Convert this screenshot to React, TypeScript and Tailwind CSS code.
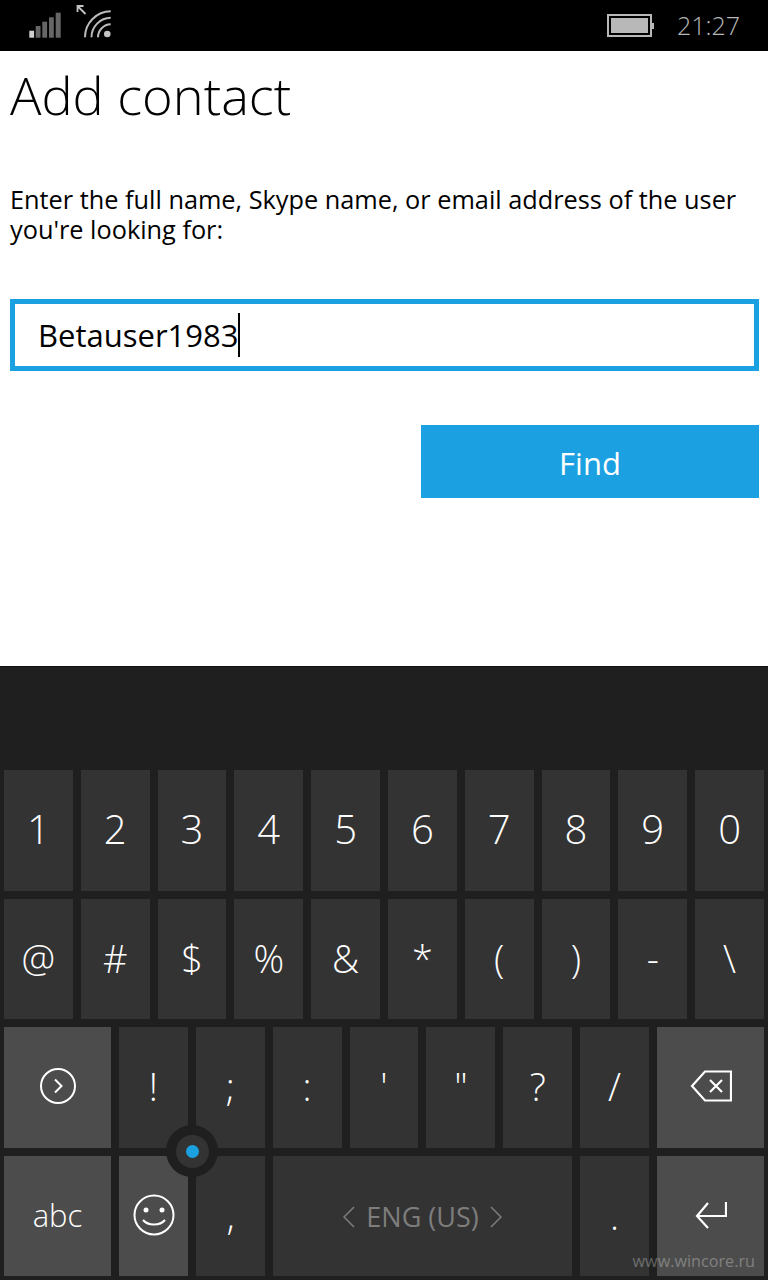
import React from 'react';

const row1 = ['1', '2', '3', '4', '5', '6', '7', '8', '9', '0'];
const row2 = ['@', '#', '$', '%', '&', '*', '(', ')', '-', '\\'];
const row3 = ['!', ';', ':', "'", '"', '?', '/'];

function Key({ label, wide, light, size, children }: { label?: string; wide?: boolean; light?: boolean; size?: string; children?: React.ReactNode }) {
  return (
    <div
      className={`flex items-center justify-center text-white font-light leading-none ${size ?? 'text-[38px] pb-[2px]'} ${wide ? 'w-[107px] shrink-0' : 'flex-1 min-w-0'} ${light ? 'bg-[#4c4c4c]' : 'bg-[#333333]'}`}
    >
      {label}
      {children}
    </div>
  );
}

function StatusBar() {
  return (
    <div className="h-[51px] bg-black flex items-center text-[#b8b8b8] shrink-0">
      <svg width="120" height="51" viewBox="0 0 120 51" className="shrink-0">
        <rect x="29.300" y="30.700" width="4.800" height="7" fill="#cfcfcf" />
        <rect x="35.700" y="26" width="4.800" height="11.700" fill="#666" />
        <rect x="42.300" y="21.700" width="4.800" height="16" fill="#666" />
        <rect x="49" y="17.300" width="4.800" height="20.400" fill="#666" />
        <rect x="55.700" y="12.700" width="5" height="25" fill="#666" />
        <path d="M85.500 14L77.500 6M77.500 12V6H83.500" stroke="#c4c4c4" strokeWidth="1.800" fill="none" />
        <path d="M85 37.300A26 26 0 0 1 110.700 11.300" stroke="#bbb" strokeWidth="2" fill="none" />
        <path d="M91.500 37.300A19.500 19.500 0 0 1 110.700 17.800" stroke="#bbb" strokeWidth="2" fill="none" />
        <path d="M98 37.300A13 13 0 0 1 110.700 24.300" stroke="#bbb" strokeWidth="2" fill="none" />
        <circle cx="107.300" cy="34" r="3.300" fill="#c4c4c4" />
      </svg>
      <div className="ml-auto flex items-center">
        <div className="w-[45px] h-[23px] border-2 border-[#b8b8b8] p-[2px]">
          <div className="w-full h-full bg-[#b8b8b8]" />
        </div>
        <div className="w-[2px] h-[6px] bg-[#b8b8b8]" />
        <span className="ml-[23px] mr-[28px] text-[25px] leading-none font-light">21:27</span>
      </div>
    </div>
  );
}

export default function App() {
  return (
    <div className="relative w-[768px] h-[1280px] overflow-hidden flex flex-col bg-white" style={{ fontFamily: '"Open Sans", "Noto Sans", sans-serif' }}>
      <StatusBar />

      {/* Page content */}
      <div className="flex-1 min-h-0 px-[10px] text-black">
        <h1 className="text-[52.300px] leading-[60px] font-light mt-[14px]">Add contact</h1>
        <p className="text-[25.300px] leading-[30px] mt-[58px] pt-[1px] -mb-[1px]">
          Enter the full name, Skype name, or email address of the user you're looking for:
        </p>
        <div className="mt-[56px] mr-[-1px] h-[72px] border-[5px] border-[#1ba1e2] flex items-center pl-[23px] text-[31px]">
          <span>Betauser1983</span>
          <span className="w-[2px] h-[44px] bg-black" />
        </div>
        <div className="flex justify-end mt-[54px] mr-[-1px]">
          <div className="w-[338px] h-[73px] pt-[3px] bg-[#1ba1e2] text-white text-[31px] flex items-center justify-center">Find</div>
        </div>
      </div>

      {/* Keyboard */}
      <div className="relative h-[614px] shrink-0 bg-[#1f1f1f] border-t border-[#111] px-[4px] pt-[103px] pb-[4px] flex flex-col gap-[8px]">
        <div className="flex-1 flex gap-[8px]">
          {row1.map(k => <Key key={k} label={k} size="text-[40px] pb-[2px]" />)}
        </div>
        <div className="flex-1 flex gap-[8px]">
          {row2.map(k => <Key key={k} label={k} />)}
        </div>
        <div className="flex-1 flex gap-[8px]">
          <Key wide light>
            <svg width="38" height="38" viewBox="0 0 38 38" fill="none" stroke="white" strokeWidth="2">
              <circle cx="19" cy="19" r="17" />
              <path d="M16 12.500l6.500 6.500-6.500 6.500" />
            </svg>
          </Key>
          {row3.map(k => <Key key={k} label={k} />)}
          <Key wide light>
            <svg width="42" height="32" viewBox="0 0 42 32" fill="none" stroke="white" strokeWidth="2.200">
              <path d="M41 1.500H15L2 16l13 14.500h26z" />
              <path d="M20 10l12 12M32 10L20 22" />
            </svg>
          </Key>
        </div>
        <div className="flex-1 flex gap-[8px]">
          <Key wide light label="abc" size="text-[31px]" />
          <div className="flex gap-[8px] w-[146px] shrink-0">
            <Key light>
              <svg width="42" height="42" viewBox="0 0 42 42" fill="none" stroke="white" strokeWidth="2">
                <circle cx="21" cy="21" r="19.500" />
                <circle cx="13" cy="16" r="2.500" fill="white" stroke="none" />
                <circle cx="29" cy="16" r="2.500" fill="white" stroke="none" />
                <path d="M10 26c5 6 17 6 22 0" />
              </svg>
            </Key>
            <Key label="," />
          </div>
          <div className="w-[299px] shrink-0 pt-[2px] bg-[#333333] flex items-center justify-center gap-[11px] text-[#7d7d7d] text-[27px]">
            <svg width="12" height="22" viewBox="0 0 12 22" fill="none" stroke="#7d7d7d" strokeWidth="1.500"><path d="M11 1L1 11l10 10" /></svg>
            <span>ENG (US)</span>
            <svg width="12" height="22" viewBox="0 0 12 22" fill="none" stroke="#7d7d7d" strokeWidth="1.500"><path d="M1 1l10 10L1 21" /></svg>
          </div>
          <Key label="." />
          <Key wide light>
            <svg width="32" height="28" viewBox="0 0 32 28" fill="none" stroke="white" strokeWidth="2.200">
              <path d="M31 1v14H2" />
              <path d="M13 2L2 15l11 12" />
            </svg>
          </Key>
        </div>

        {/* Split handle */}
        <div className="absolute left-[166px] top-[458px] w-[52px] h-[52px] rounded-full bg-[#1f1f1f] flex items-center justify-center">
          <div className="w-[33px] h-[33px] rounded-full bg-[#333333] flex items-center justify-center">
            <div className="w-[13px] h-[13px] rounded-full bg-[#1ba1e2]" />
          </div>
        </div>

        <span className="absolute right-[13px] bottom-[7px] text-[16.200px] leading-[24px] text-white/30">www.wincore.ru</span>
      </div>
    </div>
  );
}
